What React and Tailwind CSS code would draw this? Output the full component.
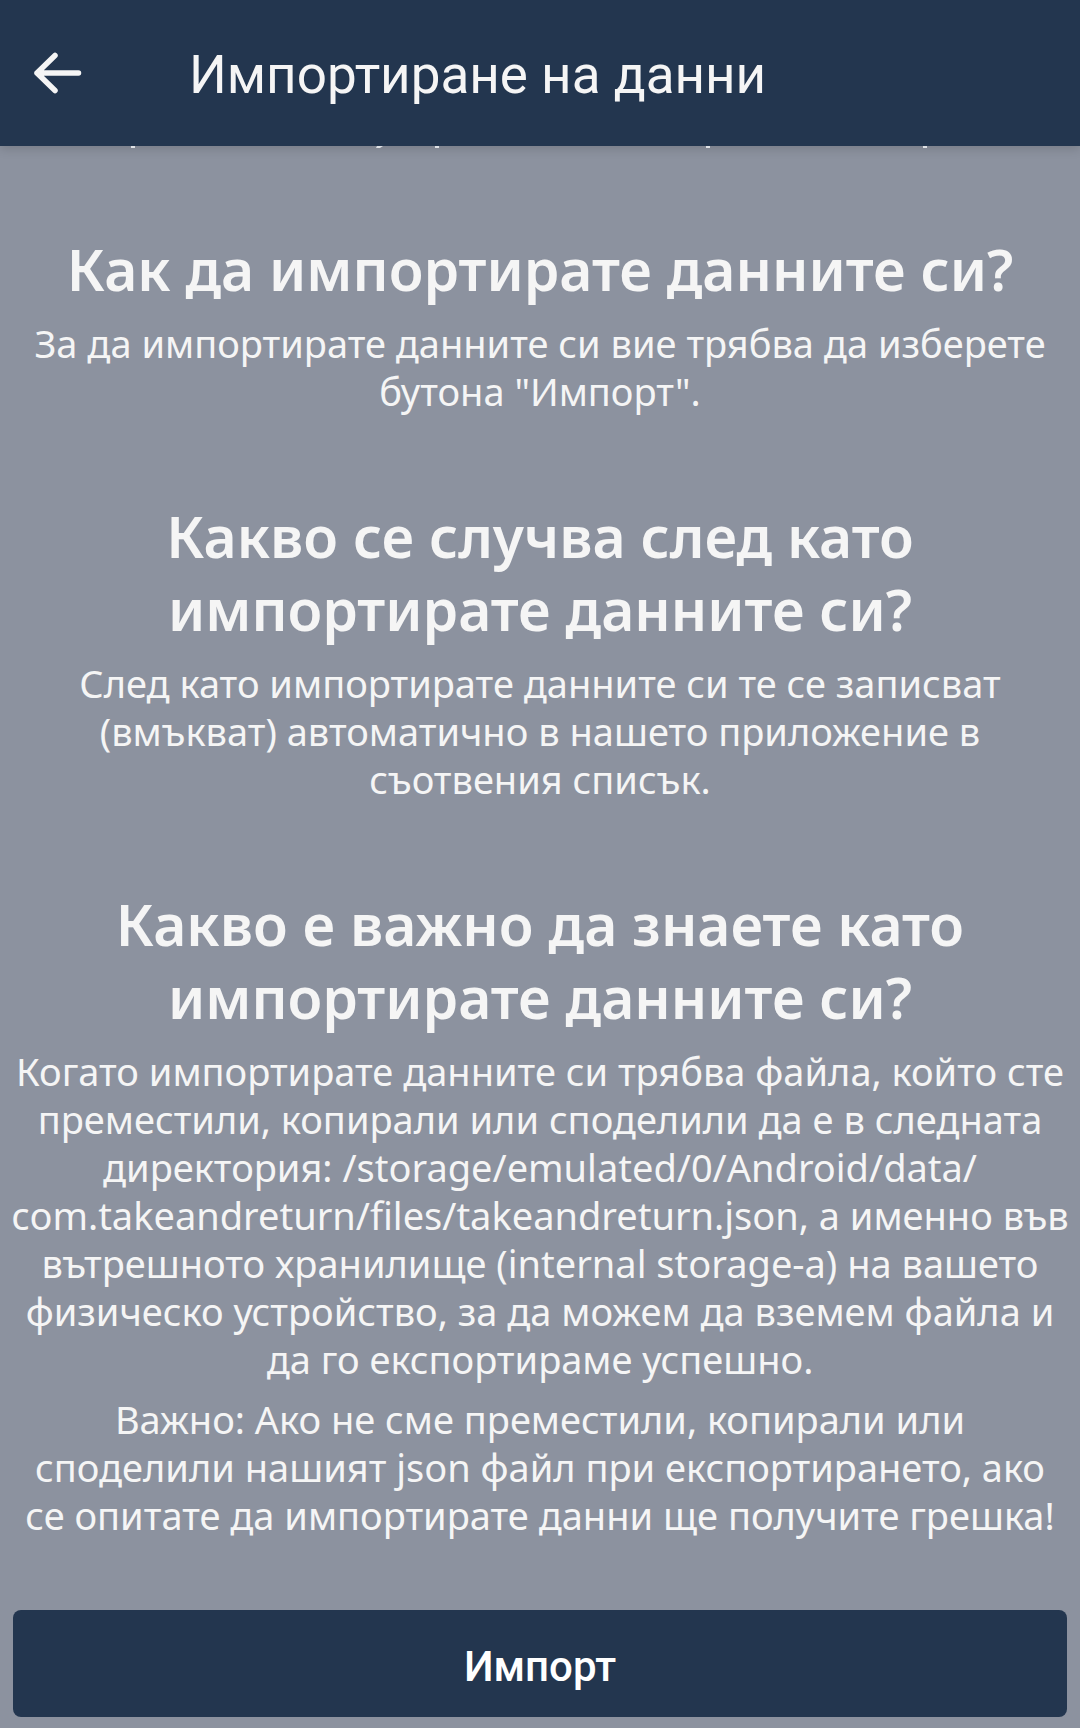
const sections = [
  {
    title: ['Как да импортирате данните си?'],
    paragraphs: [
      ['За да импортирате данните си вие трябва да изберете', 'бутона "Импорт".'],
    ],
  },
  {
    title: ['Какво се случва след като', 'импортирате данните си?'],
    paragraphs: [
      [
        'След като импортирате данните си те се записват',
        '(вмъкват) автоматично в нашето приложение в',
        'съотвения списък.',
      ],
    ],
  },
  {
    title: ['Какво е важно да знаете като', 'импортирате данните си?'],
    paragraphs: [
      [
        'Когато импортирате данните си трябва файла, който сте',
        'преместили, копирали или споделили да е в следната',
        'директория: /storage/emulated/0/Android/data/',
        'com.takeandreturn/files/takeandreturn.json, а именно във',
        'вътрешното хранилище (internal storage-a) на вашето',
        'физическо устройство, за да можем да вземем файла и',
        'да го експортираме успешно.',
      ],
      [
        'Важно: Ако не сме преместили, копирали или',
        'споделили нашият json файл при експортирането, ако',
        'се опитате да импортирате данни ще получите грешка!',
      ],
    ],
  },
];

function Lines({ lines }) {
  return lines.map((line) => (
    <span key={line} className="block whitespace-nowrap">
      {line}
    </span>
  ));
}

function Section({ title, paragraphs }) {
  return (
    <section className="flex flex-col items-center">
      <h2 className="mb-[13px] text-[57px] leading-[73px] font-semibold">
        <Lines lines={title} />
      </h2>
      <div className="flex flex-col items-center gap-3 text-[38px] leading-[48px]">
        {paragraphs.map((lines) => (
          <p key={lines[0]}>
            <Lines lines={lines} />
          </p>
        ))}
      </div>
    </section>
  );
}

export default function App() {
  return (
    <div className="flex min-h-screen flex-col overflow-hidden bg-[#8c929f] text-[#f5f5f5]">
      <header className="z-10 flex h-[146px] items-center bg-[#23364f] pl-8 font-['Roboto',sans-serif] shadow-[0_3px_10px_rgba(0,0,0,0.15)]">
        <button type="button" aria-label="Назад" className="mr-[105px]">
          <svg width="52" height="48" viewBox="0 0 52 48" fill="none" stroke="currentColor" strokeWidth="5.5" strokeLinecap="round" strokeLinejoin="round" aria-hidden="true">
            <path d="M23 6.500 5 24l18 17.500M5 24h41.500" />
          </svg>
        </button>
        <h1 className="pt-1 text-[53px] leading-[60px] font-normal">Импортиране на данни</h1>
      </header>
      <main className="flex grow flex-col text-center font-['Noto_Sans',sans-serif]">
        <svg className="relative z-20 h-[2px] w-full" viewBox="0 0 1080 2" preserveAspectRatio="none" fill="#dfe1e5" aria-hidden="true">
          <path d="M131 0h4v2h-4zM377 0h6l-3 2h-4zM435 0h4v2h-4zM706 0h4v2h-4zM923 0h4v2h-4z" />
        </svg>
        <div className="mt-[85px] flex flex-col gap-[85px]">
          {sections.map((section) => (
            <Section key={section.title[0]} {...section} />
          ))}
        </div>
        <div className="mt-auto px-[13px] pt-[70px] pb-[11px]">
          <button type="button" className="h-[107px] w-full rounded-lg bg-[#23364f] pt-[6px] font-['Roboto',sans-serif] text-[42px] leading-[48px] font-medium text-white">
            Импорт
          </button>
        </div>
      </main>
    </div>
  );
}
